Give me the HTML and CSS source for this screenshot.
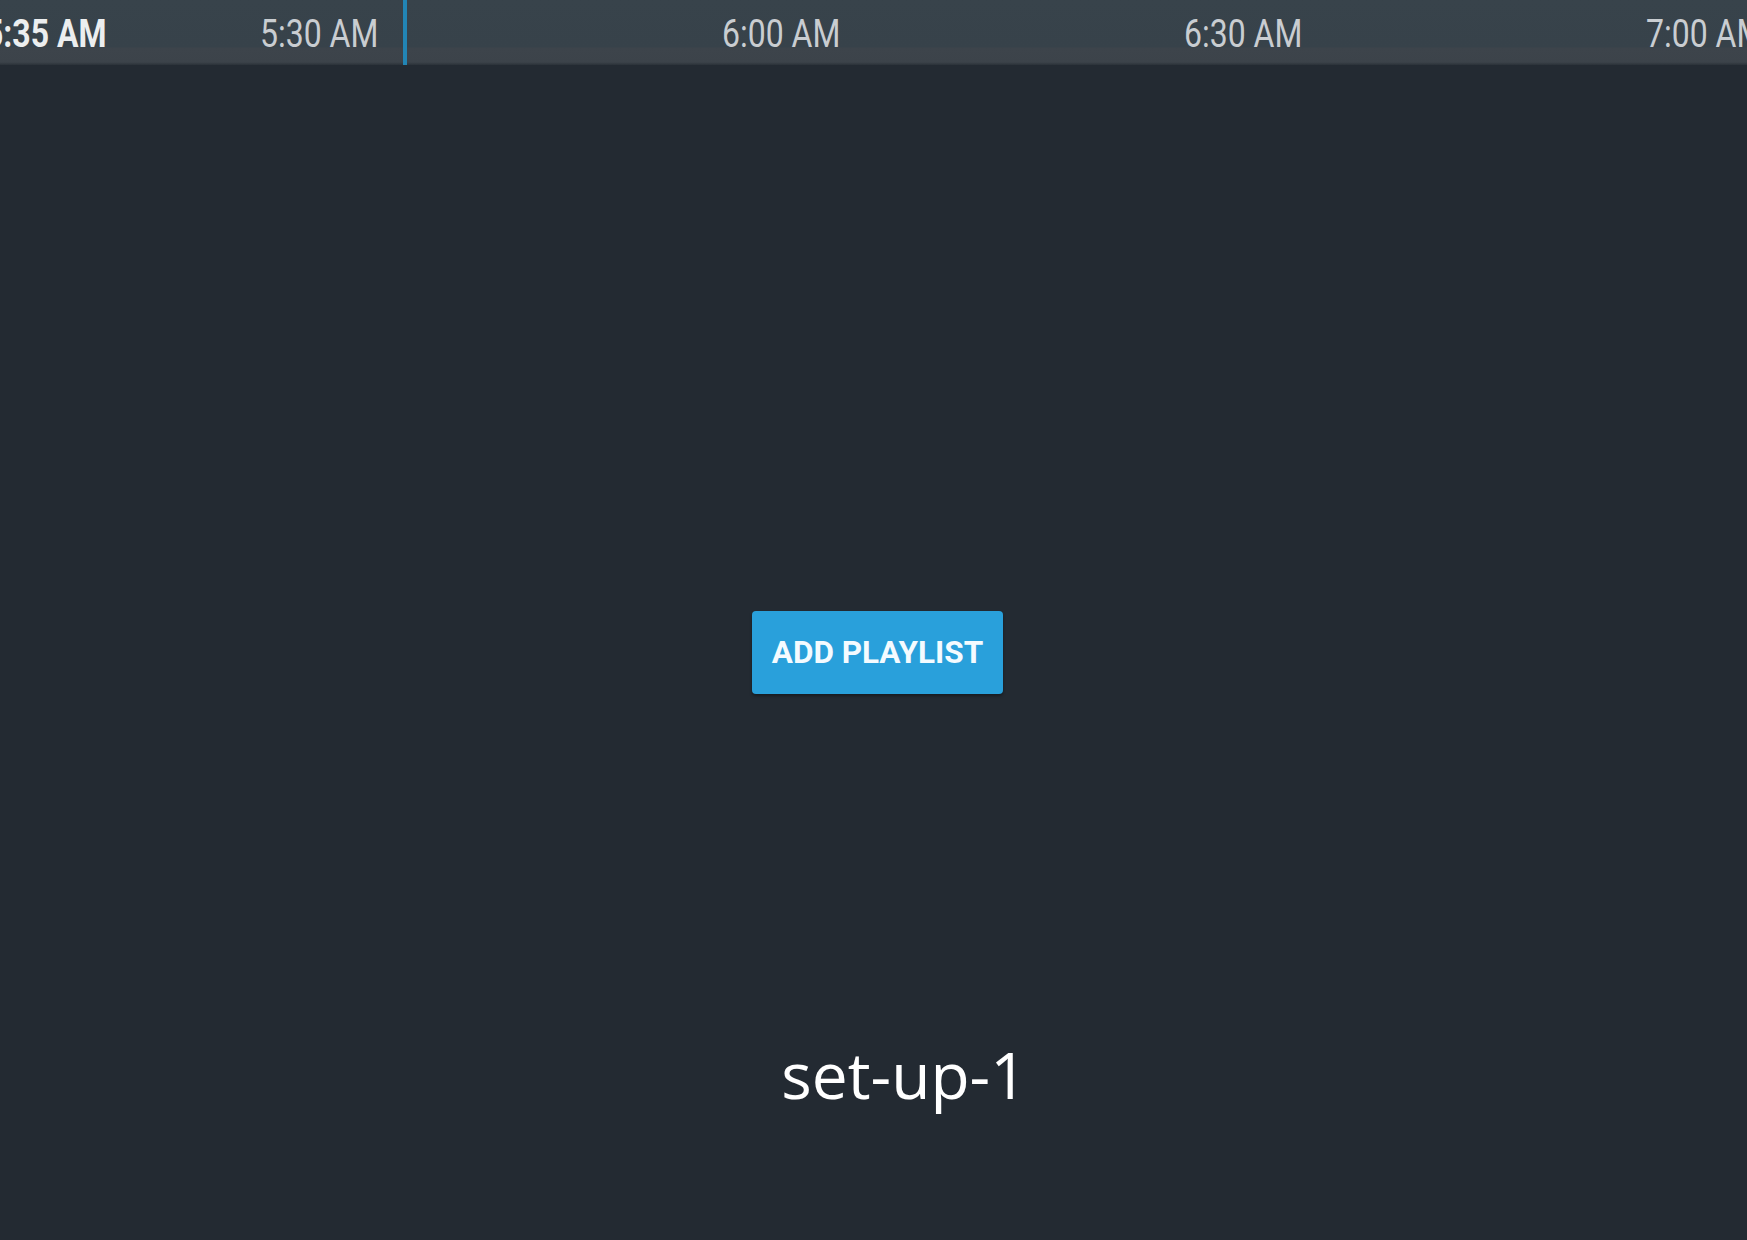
FILE: index.html
```html
<!DOCTYPE html>
<html lang="en">
<head>
    <meta charset="UTF-8">
    <meta name="viewport" content="width=device-width, initial-scale=1.0">
    <title>set-up-1</title>
    <link rel="stylesheet" href="styles.css">
</head>
<body>

    <!-- Timeline header -->
    <div class="timeline">
        <span class="now-label">5:35 AM</span>
        <div class="ticks">
            <div class="tick"><span>5:30 AM</span></div>
            <div class="tick"><span>6:00 AM</span></div>
            <div class="tick"><span>6:30 AM</span></div>
            <div class="tick"><span>7:00 AM</span></div>
        </div>
        <div class="now-line"></div>
    </div>

    <!-- Empty schedule -->
    <div class="stage">
        <button type="button" class="btn-add">ADD PLAYLIST</button>
        <div class="caption">set-up-1</div>
    </div>

</body>
</html>
```

FILE: styles.css
```css
/* General Page Styling */
body {
    margin: 0;
    padding: 0;
    background-color: #232a32;
    font-family: Roboto, "DejaVu Sans", sans-serif;
    overflow: hidden;
}

/* Timeline Header */
.timeline {
    position: relative;
    height: 65px;
    overflow: hidden;
    background: linear-gradient(to bottom, #38434b 0, #37424a 47px, #3d444b 48px, #3c434a 62px, #2b3239 65px);
}

.ticks {
    display: flex;
    margin-left: 260px;
}

.tick {
    flex: 0 0 462px;
    font-size: 39px;
    line-height: 48px;
    padding-top: 10px;
    color: #c9cdd1;
    white-space: nowrap;
}

/* condensed look: the face has no narrow cut installed */
.tick span,
.now-label {
    display: inline-block;
    transform: scaleX(0.82);
    transform-origin: left center;
}

.now-label {
    position: absolute;
    left: -15px;
    top: 10px;
    font-size: 39px;
    line-height: 48px;
    font-weight: bold;
    color: #eceeef;
    white-space: nowrap;
}

.now-line {
    position: absolute;
    left: 403px;
    top: 0;
    width: 4px;
    height: 65px;
    background-color: #2285b5;
}

/* Stage */
.stage {
    display: flex;
    flex-direction: column;
    align-items: center;
    height: 1175px;
}

.btn-add {
    margin-top: 546px;
    margin-left: 8px;
    width: 251px;
    height: 83px;
    padding: 0;
    border: none;
    border-radius: 4px;
    background-color: #29a0db;
    color: #f4fbff;
    font-family: Roboto, sans-serif;
    font-size: 31.5px;
    font-weight: bold;
    box-shadow: 0 2px 3px rgba(0, 0, 0, 0.35);
    cursor: pointer;
}

.caption {
    margin-top: 349px;
    margin-left: 61px;
    font-family: "Open Sans", sans-serif;
    font-size: 64px;
    line-height: 64px;
    color: #ffffff;
}
```
